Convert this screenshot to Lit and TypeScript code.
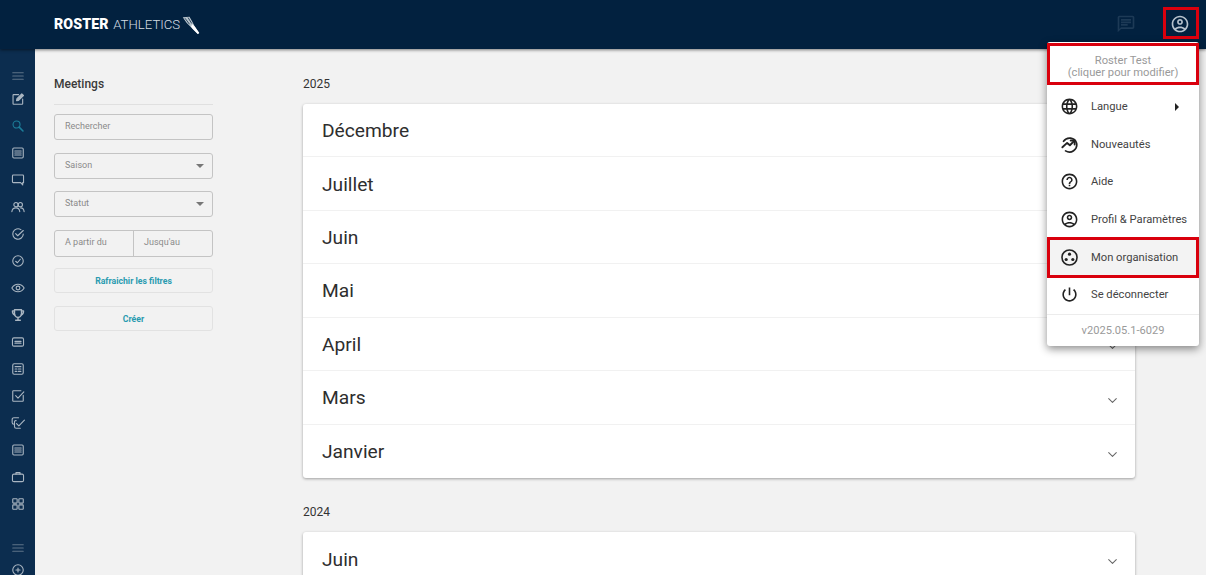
import { LitElement, html, css, svg } from "lit";
import { customElement } from "lit/decorators.js";

const fill = (d: string) => svg`<path d=${d} fill="currentColor" stroke="none"></path>`;
const ICONS: Record<string, unknown> = {
  menu: svg`<path d="M3 6.5h18M3 12h18M3 17.5h18"></path>`,
  edit: svg`<path d="M13 4.5H4.5a1 1 0 0 0-1 1V20a1 1 0 0 0 1 1H19a1 1 0 0 0 1-1v-8"></path><path d="M9.5 15l.7-3.5L18.5 3.2l2.8 2.8-8.3 8.3z" fill="currentColor"></path>`,
  search: svg`<circle cx="9.5" cy="9.5" r="6"></circle><path d="M14 14l6.5 6.5" stroke-width="2.8"></path>`,
  list: svg`<rect x="3" y="3.5" width="18" height="17" rx="2"></rect><path d="M6.5 8.5h11M6.5 12h11M6.5 15.5h11"></path>`,
  chat: svg`<path d="M2.5 5a1.5 1.5 0 0 1 1.5-1.5h16A1.5 1.5 0 0 1 21.5 5v11.5H20v4l-3.5-4H4A1.5 1.5 0 0 1 2.5 15z"></path>`,
  people: svg`<circle cx="8.5" cy="8" r="3.6"></circle><circle cx="16" cy="8" r="3.6"></circle><path d="M1.5 20c.5-4.5 3.5-6.5 7-6.5s6 2 6.5 6.5"></path><path d="M16.5 13.5c3.3 0 5.5 2 6 6.5"></path>`,
  checkC: svg`<path d="M21 12a9 9 0 1 1-4-7.5"></path><path d="M8 11.5l3.5 3.5L21 6"></path>`,
  clockC: svg`<circle cx="12" cy="12" r="9"></circle><path d="M8 12.5l3 2.5 5-6"></path>`,
  eye: svg`<path d="M1.5 12C4 7.5 8 5.5 12 5.5s8 2 10.5 6.5C20 16.5 16 18.5 12 18.5S4 16.5 1.5 12z"></path><circle cx="12" cy="12" r="3.2"></circle>`,
  trophy: svg`<path d="M6 3h12v7a6 6 0 0 1-12 0z" stroke-width="2.4"></path><path d="M6 5H2.5c0 4 1 6 4 7M18 5h3.5c0 4-1 6-4 7M12 16v3.5M8 21h8" stroke-width="2.4"></path>`,
  ticket: svg`<rect x="2.5" y="5" width="19" height="14" rx="2.5"></rect><path d="M7 11h10M7 14h10" stroke-width="2.4"></path>`,
  article: svg`<rect x="3" y="3" width="18" height="18" rx="2.5"></rect><path d="M7 8h10M12.5 12H17M12.5 16H17M7 12h3M7 16h3"></path>`,
  checkB: svg`<path d="M21 11v9a1 1 0 0 1-1 1H4a1 1 0 0 1-1-1V4a1 1 0 0 1 1-1h13"></path><path d="M8 11.5l4 4L22 5"></path>`,
  checks: svg`<path d="M13 3H5a3 3 0 0 0-3 3v5a3 3 0 0 0 3 3"></path><path d="M6 9a3 3 0 0 1 3-1M6 9v9a3 3 0 0 0 3 3h7"></path><path d="M9.5 13l4 4L23 7"></path>`,
  brief: svg`<rect x="2.5" y="7" width="19" height="13" rx="2.5"></rect><path d="M8.5 7V4.5h7V7"></path>`,
  grid: svg`<rect x="3" y="3" width="7.5" height="7.5" rx="1"></rect><rect x="13.5" y="3" width="7.5" height="7.5" rx="1"></rect><rect x="3" y="13.5" width="7.5" height="7.5" rx="1"></rect><rect x="13.5" y="13.5" width="7.5" height="7.5" rx="1"></rect>`,
  plusC: svg`<circle cx="12" cy="12" r="9"></circle><path d="M12 8.5v7M8.5 12h7"></path>`,
  chevron: svg`<path d="M5 8.5l7 7 7-7"></path>`,
  message: fill("M20 2H4c-1.1 0-2 .9-2 2v18l4-4h14c1.1 0 2-.9 2-2V4c0-1.1-.9-2-2-2zm0 14H6l-2 2V4h16v12zM6 12h8v2H6zm0-3h12v2H6zm0-3h12v2H6z"),
  account: fill("M12 2C6.48 2 2 6.48 2 12s4.48 10 10 10 10-4.48 10-10S17.52 2 12 2zM7.35 18.5C8.66 17.56 10.26 17 12 17s3.34.56 4.65 1.5c-1.31.94-2.91 1.5-4.65 1.5s-3.34-.56-4.65-1.5zm10.79-1.38C16.45 15.8 14.32 15 12 15s-4.45.8-6.14 2.12C4.7 15.73 4 13.95 4 12c0-4.42 3.58-8 8-8s8 3.58 8 8c0 1.95-.7 3.73-1.86 5.12zM12 6c-1.93 0-3.5 1.57-3.5 3.5S10.07 13 12 13s3.5-1.57 3.5-3.5S13.93 6 12 6zm0 5c-.83 0-1.5-.67-1.5-1.5S11.17 8 12 8s1.5.67 1.5 1.5S12.83 11 12 11z"),
  globe: fill("M11.99 2C6.47 2 2 6.48 2 12s4.47 10 9.99 10C17.52 22 22 17.52 22 12S17.52 2 11.99 2zm6.93 6h-2.95c-.32-1.25-.78-2.45-1.38-3.56 1.84.63 3.37 1.91 4.33 3.56zM12 4.04c.83 1.2 1.48 2.53 1.91 3.96h-3.82c.43-1.43 1.08-2.76 1.91-3.96zM4.26 14C4.1 13.36 4 12.69 4 12s.1-1.36.26-2h3.38c-.08.66-.14 1.32-.14 2 0 .68.06 1.34.14 2H4.26zm.82 2h2.95c.32 1.25.78 2.45 1.38 3.56-1.84-.63-3.37-1.9-4.33-3.56zm2.95-8H5.08c.96-1.66 2.49-2.93 4.33-3.56C8.81 5.55 8.35 6.75 8.03 8zM12 19.96c-.83-1.2-1.48-2.53-1.91-3.96h3.82c-.43 1.43-1.08 2.76-1.91 3.96zM14.34 14H9.66c-.09-.66-.16-1.32-.16-2 0-.68.07-1.35.16-2h4.68c.09.65.16 1.32.16 2 0 .68-.07 1.34-.16 2zm.25 5.56c.6-1.11 1.06-2.31 1.38-3.56h2.95c-.96 1.65-2.49 2.93-4.33 3.56zM16.36 14c.08-.66.14-1.32.14-2 0-.68-.06-1.34-.14-2h3.38c.16.64.26 1.31.26 2s-.1 1.36-.26 2h-3.38z"),
  news: svg`<path d="M4.5 8A9.2 9.2 0 0 1 21 10.5 9.2 9.2 0 0 1 7 20" stroke-width="2.1"></path><path d="M3 15.5l6-5.5 3.5 3L18 7.5" stroke-width="2.4"></path><path d="M13.5 7h5v5" stroke-width="2.4"></path>`,
  help: fill("M11 18h2v-2h-2v2zm1-16C6.48 2 2 6.48 2 12s4.48 10 10 10 10-4.48 10-10S17.52 2 12 2zm0 18c-4.41 0-8-3.59-8-8s3.59-8 8-8 8 3.59 8 8-3.59 8-8 8zm0-14c-2.21 0-4 1.79-4 4h2c0-1.1.9-2 2-2s2 .9 2 2c0 2-3 1.75-3 5h2c0-2.25 3-2.5 3-5 0-2.21-1.79-4-4-4z"),
  org: svg`<circle cx="12" cy="12" r="9.5" stroke-width="2"></circle><circle cx="12" cy="7.8" r="2" fill="currentColor" stroke="none"></circle><circle cx="7.8" cy="14.5" r="2" fill="currentColor" stroke="none"></circle><circle cx="16.2" cy="14.5" r="2" fill="currentColor" stroke="none"></circle>`,
  power: fill("M13 3h-2v10h2V3zm4.83 2.17l-1.42 1.42C17.99 7.86 19 9.81 19 12c0 3.87-3.13 7-7 7s-7-3.13-7-7c0-2.19 1.01-4.14 2.58-5.42L6.17 5.17C4.23 6.82 3 9.26 3 12c0 4.97 4.03 9 9 9s9-4.03 9-9c0-2.74-1.23-5.18-3.17-6.83z"),
};

const icon = (n: string) => html`<svg class="ic" viewBox="0 0 24 24" fill="none" stroke="currentColor" stroke-width="1.9" stroke-linecap="round" stroke-linejoin="round">${ICONS[n]}</svg>`;

const NAV = ["edit","search","list","chat","people","checkC","clockC","eye","trophy","ticket","article","checkB","checks","list","brief","grid"];
const GROUPS: [string, string[]][] = [
  ["2025", ["Décembre","Juillet","Juin","Mai","April","Mars","Janvier"]],
  ["2024", ["Juin"]],
];
const MENU: [string, string][] = [["globe","Langue"],["news","Nouveautés"],["help","Aide"],["account","Profil & Paramètres"],["org","Mon organisation"],["power","Se déconnecter"]];

@customElement("app-root")
export class AppRoot extends LitElement {
  static styles = css`
    :host { display:flex; flex-direction:column; position:relative; width:1206px; height:575px; overflow:hidden; background:#f2f2f2; font-family:Roboto,"Liberation Sans",sans-serif; color:#2b2b2b; }
    .ic { display:block; width:100%; height:100%; }
    header { flex:none; position:relative; z-index:2; height:49px; background:#02213f; box-shadow:0 1px 3px rgba(0,0,0,.5); display:flex; align-items:center; padding-left:54px; padding-right:16px; padding-bottom:1px; box-sizing:border-box; }
    .logo { display:flex; align-items:center; font-size:13.2px; color:#d5dde3; font-weight:300; }
    .logo b { font-size:14.2px; font-weight:900; color:#fff; margin-right:4.5px; letter-spacing:.1px; }
    .wing { width:18px; height:18px; margin-left:2px; margin-top:1px; }
    .spacer { flex:1; }
    .hmsg { width:20px; height:20px; color:#1d3a56; margin-right:34px; }
    .hacc { width:20px; height:20px; color:#b6c2cd; }
    .body { flex:1; display:flex; min-height:0; }
    nav { flex:none; width:35px; background:#0c2d4f; display:flex; flex-direction:column; align-items:center; padding-top:20px; color:#aab6c2; }
    .ni { width:14px; height:14px; flex:none; margin-bottom:13px; }
    .ni.first { margin-bottom:9px; color:#5d7388; }
    .ni.active { color:#1c7d99; }
    .ni.sep { margin-top:17px; margin-bottom:8px; color:#5d7388; }
    .filters { flex:none; width:159px; margin-left:19px; padding-top:28px; display:flex; flex-direction:column; }
    .ft { font-size:12px; font-weight:500; line-height:15px; color:#3a3a3a; padding-bottom:12px; border-bottom:1px solid #e0e0e0; margin-bottom:9px; }
    .field { height:26px; box-sizing:border-box; border:1px solid #c4c4c4; border-radius:3px; display:flex; align-items:center; padding:0 8px 2px 10px; font-size:9px; color:#8a8a8a; margin-bottom:12.5px; justify-content:space-between; }
    .caret { width:0; height:0; border-left:4.5px solid transparent; border-right:4.5px solid transparent; border-top:4.5px solid #777; margin-top:2px; }
    .dates { padding:0; height:27px; margin-bottom:11.5px; }
    .dates span { flex:1; padding-left:10px; line-height:23px; height:25px; box-sizing:border-box; }
    .dates span + span { border-left:1px solid #c4c4c4; }
    .btn { height:25px; box-sizing:border-box; border:1px solid #e2e2e2; border-radius:3px; display:flex; align-items:center; justify-content:center; font-size:8.7px; font-weight:700; color:#2a9bb0; margin-bottom:13px; }
    main { flex:none; width:832px; margin-left:90px; padding-top:28px; display:flex; flex-direction:column; }
    .year { font-size:12px; line-height:15px; color:#333; margin-bottom:12px; }
    .card { background:#fff; border-radius:3px; box-shadow:0 1px 3px rgba(0,0,0,.35); margin-bottom:27px; flex:none; }
    .row { height:53.43px; box-sizing:border-box; display:flex; align-items:center; justify-content:space-between; padding:1px 16px 0 19px; font-size:19.2px; color:#2e2e2e; border-bottom:1px solid #f1f1f1; }
    .row:last-child { border-bottom:none; }
    .chev { width:13px; height:13px; color:#666; margin-top:5px; }
    .menu { position:absolute; z-index:3; left:1047px; top:42px; width:152px; height:304px; background:#fff; border-radius:3px; box-shadow:0 3px 8px rgba(0,0,0,.45); display:flex; flex-direction:column; }
    .mh { height:46px; flex:none; display:flex; flex-direction:column; align-items:center; justify-content:center; font-size:11.2px; line-height:11.5px; color:#9a9a9a; padding-top:3px; box-sizing:border-box; }
    .mi { height:37.6px; flex:none; display:flex; align-items:center; padding:0 0 0 13px; font-size:11.2px; color:#444; position:relative; white-space:nowrap; }
    .mi.on { background:#f3f3f3; }
    .mic { width:19px; height:19px; color:#222; margin-right:12px; flex:none; }
    .arrow { position:absolute; right:20px; width:0; height:0; border-top:4px solid transparent; border-bottom:4px solid transparent; border-left:4.5px solid #222; }
    .ver { border-top:1px solid #ececec; flex:1; display:flex; align-items:center; justify-content:center; font-size:11.1px; color:#9a9a9a; margin-top:0; }
    .mark { position:absolute; z-index:4; box-sizing:border-box; border:3px solid #d9000d; pointer-events:none; }
    .m1 { left:1163px; top:7px; width:36px; height:32px; }
    .m2 { left:1047px; top:43px; width:152px; height:42px; }
    .m3 { left:1047px; top:237px; width:152px; height:41px; }
  `;

  render() {
    return html`
      <header>
        <div class="logo"><b>ROSTER</b>ATHLETICS
          <svg class="wing" viewBox="0 0 24 24"><path d="M1 1.5l9-.5 4 7 3 6 6 8.5-2 1.5-7-7L6 9z" fill="#b9c4cc"></path><path d="M14 11l3 3 6 8.5-2 1.5-7-7-2-3z" fill="#fff"></path><path d="M4 3l6 8M8 2l5 8" stroke="#02213f" stroke-width="1"></path></svg>
        </div>
        <div class="spacer"></div>
        <div class="hmsg">${icon("message")}</div>
        <div class="hacc">${icon("account")}</div>
      </header>
      <div class="body">
        <nav>
          <div class="ni first">${icon("menu")}</div>
          ${NAV.map((n) => html`<div class="ni ${n === "search" ? "active" : ""}">${icon(n)}</div>`)}
          <div class="ni sep">${icon("menu")}</div>
          <div class="ni">${icon("plusC")}</div>
        </nav>
        <section class="filters">
          <div class="ft">Meetings</div>
          <div class="field">Rechercher</div>
          <div class="field">Saison<span class="caret"></span></div>
          <div class="field">Statut<span class="caret"></span></div>
          <div class="field dates"><span>A partir du</span><span>Jusqu'au</span></div>
          <div class="btn">Rafraichir les filtres</div>
          <div class="btn">Créer</div>
        </section>
        <main>
          ${GROUPS.map(([y, months]) => html`
            <div class="year">${y}</div>
            <div class="card">
              ${months.map((m) => html`<div class="row">${m}<div class="chev">${icon("chevron")}</div></div>`)}
            </div>`)}
        </main>
      </div>
      <div class="menu">
        <div class="mh"><span>Roster Test</span><span>(cliquer pour modifier)</span></div>
        ${MENU.map(([i, t]) => html`
          <div class="mi ${t === "Mon organisation" ? "on" : ""}">
            <div class="mic">${icon(i)}</div>${t}
            ${t === "Langue" ? html`<span class="arrow"></span>` : ""}
          </div>`)}
        <div class="ver">v2025.05.1-6029</div>
      </div>
      <div class="mark m1"></div>
      <div class="mark m2"></div>
      <div class="mark m3"></div>
    `;
  }
}
